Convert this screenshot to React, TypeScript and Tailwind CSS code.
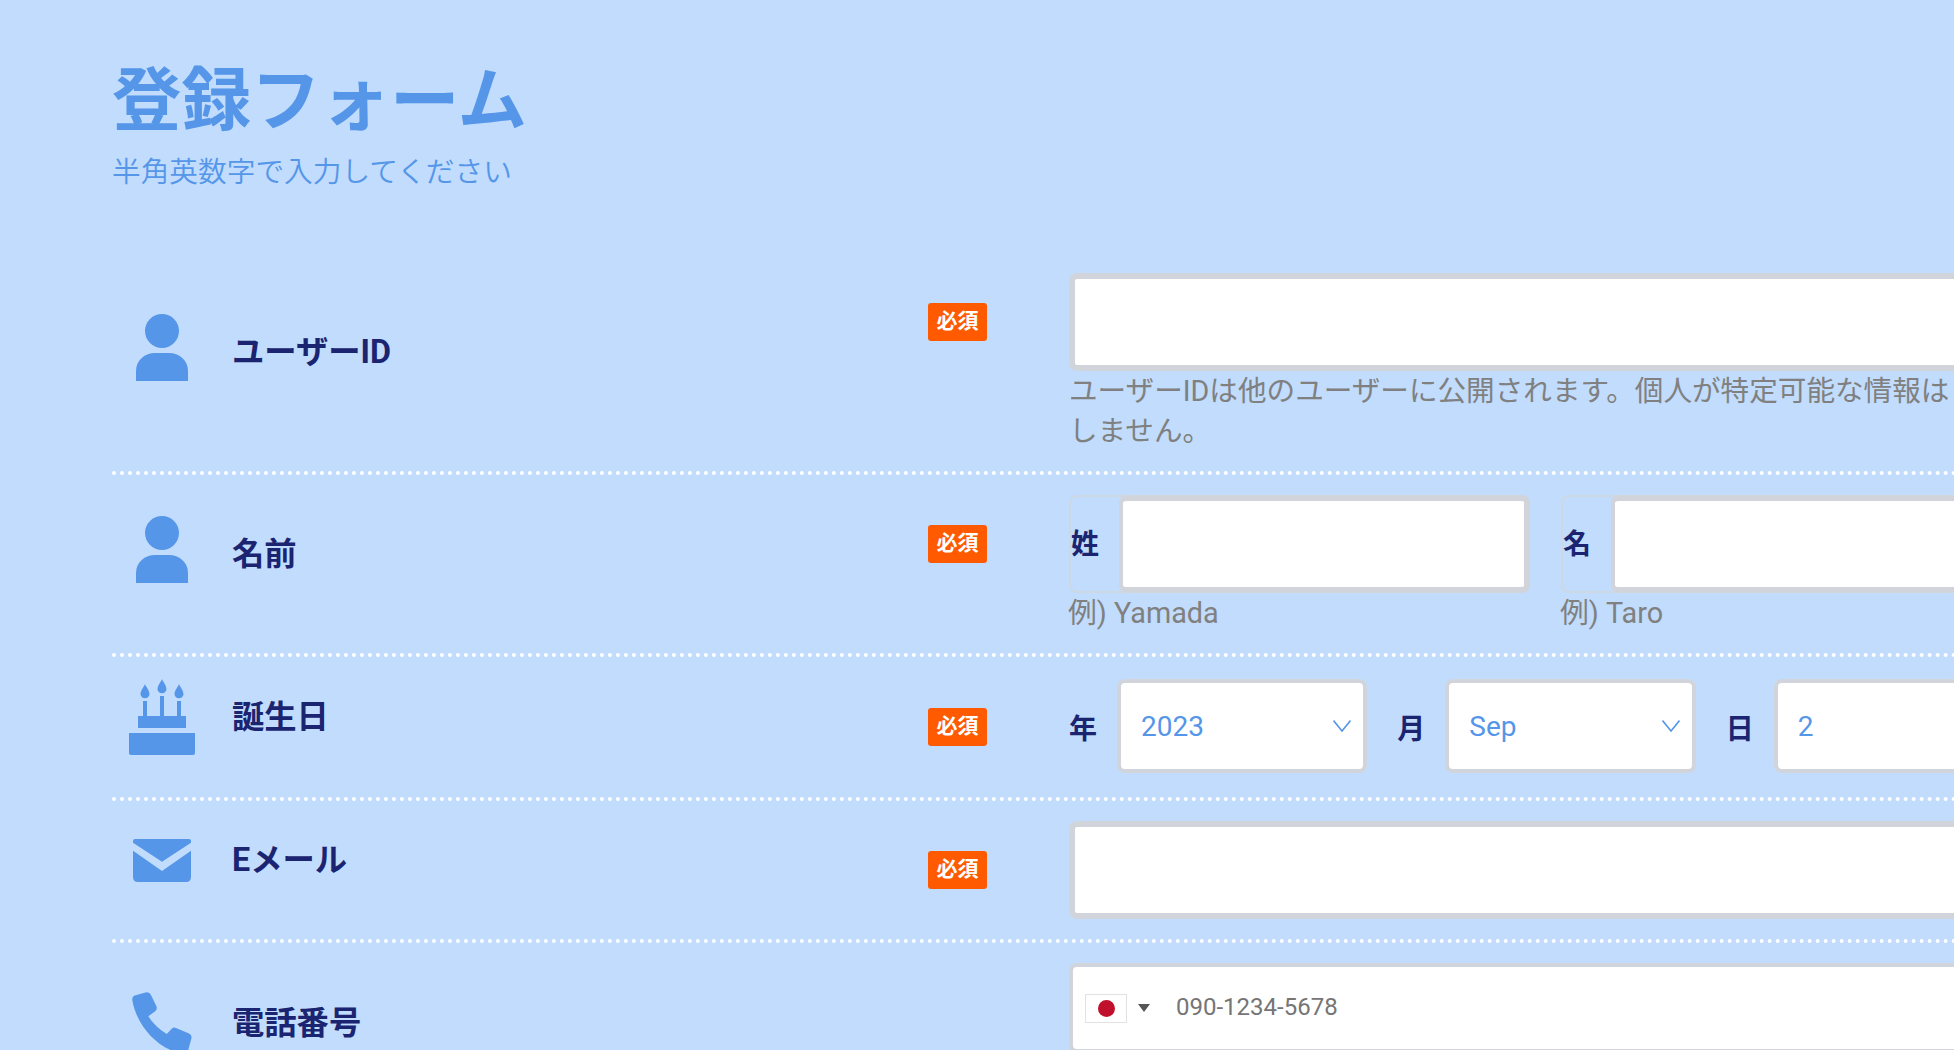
const jp = "font-['Roboto','Noto_Sans_CJK_JP',sans-serif]";

function PersonIcon() {
  return (
    <svg width="52" height="67" viewBox="0 0 52 67" fill="#5596e9" className="mb-[9px]">
      <circle cx="26" cy="17" r="17" />
      <path d="M0 67V57C0 46 9 39 19 39H33C43 39 52 46 52 57V67Z" />
    </svg>
  );
}

function CakeIcon() {
  return (
    <svg width="66" height="76" viewBox="0 0 66 76" fill="#5596e9">
      <path d="M0 54H66V74Q66 76 64 76H2Q0 76 0 74Z" />
      <rect x="9" y="37" width="48" height="12" />
      <rect x="14" y="22" width="4" height="15" />
      <rect x="31" y="17" width="4" height="20" />
      <rect x="48" y="22" width="4" height="15" />
      <path d="M16 5C17 8 20.5 11 20.5 15.5A4.6 4.6 0 0 1 11.5 15.5C11.5 11 15 8 16 5Z" />
      <path d="M33 0C34 3 37.5 6 37.5 10.5A4.6 4.6 0 0 1 28.5 10.5C28.5 6 32 3 33 0Z" />
      <path d="M50 5C51 8 54.5 11 54.5 15.5A4.6 4.6 0 0 1 45.5 15.5C45.5 11 49 8 50 5Z" />
    </svg>
  );
}

function MailIcon() {
  return (
    <svg width="58" height="43" viewBox="0 0 58 43" fill="#5596e9" className="mb-[-1px]">
      <path d="M2 0H56Q58 0 58 2V3.7L29 22.7L0 3.7V2Q0 0 2 0Z" />
      <path d="M0 11.7L29 32L58 11.7V38Q58 43 53 43H5Q0 43 0 38Z" />
    </svg>
  );
}

function PhoneIcon() {
  return (
    <svg width="60" height="63" viewBox="0 0 60 63" fill="#5596e9">
      <path d="M2 3.8L13.5 0.4Q17.5 -0.5 19 3L24.5 14.5Q25.5 17 23.5 19L16.3 24.3Q23 35 34.7 42L40 36.5Q41.5 35 44 36L57 41.5Q60 43 59.5 46L56 59Q55 62 52 62C25 58 4 32 0.3 8Q0 5 2 3.8Z" />
    </svg>
  );
}

function Badge() {
  return (
    <span className="flex h-[38px] w-[59px] items-center justify-center rounded-[3px] bg-[#ff5a00] text-[21px] font-bold text-white">
      必須
    </span>
  );
}

function Row({
  icon,
  label,
  children,
  required = true,
  badgeTop = "pt-[30px]",
}: {
  icon: React.ReactNode;
  label: string;
  children: React.ReactNode;
  required?: boolean;
  badgeTop?: string;
}) {
  return (
    <div className="flex border-b-4 border-dotted border-white py-5">
      <div className="flex w-[816px] items-center pb-[20px]">
        <div className="flex w-[100px] justify-center">{icon}</div>
        <label className="ml-5 text-[32.3px] leading-[40px] font-bold text-[#1b2470]">{label}</label>
      </div>
      <div className={`w-[141px] ${badgeTop}`}>{required && <Badge />}</div>
      <div className="w-[953px]">{children}</div>
    </div>
  );
}

const inputCls =
  "block h-[98px] w-full rounded-[8px] border-[6px] border-[#d1d5db] bg-white px-5 text-[28px] text-[#5596e9] outline-none";

function NameField({ label, example }: { label: string; example: string }) {
  return (
    <div className="flex-1">
      <div className="flex h-[98px] items-center rounded-[8px] border-2 border-[#d1d5db]/70">
        <span className="w-[48px] shrink-0 pt-[2px] text-[28px] font-bold text-[#1b2470]">{label}</span>
        <input className={`${inputCls} -my-[2px] -mr-[2px] min-w-0 flex-1 border-l-4`} />
      </div>
      <p className="-ml-[1px] text-[28.8px] leading-[40px] text-[#808080]">{example}</p>
    </div>
  );
}

function DateField({ label, value }: { label: string; value: string }) {
  return (
    <div className="flex flex-1 items-start">
      <span className="h-[94px] w-[48px] shrink-0 pt-[4px] text-[28px] leading-[94px] font-bold text-[#1b2470]">
        {label}
      </span>
      <div className="relative flex-1">
        <select
          defaultValue={value}
          className="block h-[94px] w-full appearance-none rounded-[8px] border-4 border-[#d1d5db] bg-white pt-[2px] pl-5 text-[28px] text-[#5596e9] outline-none"
        >
          <option>{value}</option>
        </select>
        <svg
          width="18"
          height="12"
          viewBox="0 0 18 12"
          fill="none"
          stroke="#5596e9"
          strokeWidth="1.6"
          className="pointer-events-none absolute top-[41px] right-[16px]"
        >
          <path d="M0.5 0.5L9 11L17.5 0.5" />
        </svg>
      </div>
    </div>
  );
}

export default function App() {
  return (
    <div className={`${jp} h-screen w-screen overflow-hidden bg-[#c1dcfc]`}>
      <div className="ml-[112px] w-[1910px]">
        <header className="h-[253px] pt-[53px]">
          <h1 className="text-[69.5px] leading-[97px] font-bold text-[#5596e9]">登録フォーム</h1>
          <p className="text-[28.7px] leading-[44px] font-[350] text-[#5596e9]">半角英数字で入力してください</p>
        </header>

        <Row icon={<PersonIcon />} label="ユーザーID">
          <input className={inputCls} />
          <p className="text-[28.6px] leading-[40px] whitespace-nowrap text-[#808080]">
            ユーザーIDは他のユーザーに公開されます。個人が特定可能な情報は
            <br />
            しません。
          </p>
        </Row>

        <Row icon={<PersonIcon />} label="名前">
          <div className="flex gap-[31px]">
            <NameField label="姓" example="例) Yamada" />
            <NameField label="名" example="例) Taro" />
          </div>
        </Row>

        <Row icon={<CakeIcon />} label="誕生日" badgeTop="pt-[31px]">
          <div className="-mr-[2px] flex h-[100px] gap-[30px] pt-[2px]">
            <DateField label="年" value="2023" />
            <DateField label="月" value="Sep" />
            <DateField label="日" value="2" />
          </div>
        </Row>

        <Row icon={<MailIcon />} label="Eメール">
          <input className={inputCls} />
        </Row>

        <Row icon={<PhoneIcon />} label="電話番号" required={false}>
          <div className="h-[140px]">
            <div className="flex h-[90px] items-center rounded-[8px] border-4 border-[#d1d5db] bg-white pl-3">
              <span className="flex h-[29px] w-[42px] items-center justify-center border border-[#e2e2e2] bg-white">
                <span className="h-[17px] w-[17px] rounded-full bg-[#c0102b]" />
              </span>
              <svg width="12" height="8" viewBox="0 0 12 8" fill="#555555" className="ml-[11px]">
                <path d="M0 0H12L6 8Z" />
              </svg>
              <input
                placeholder="090-1234-5678"
                className="mb-[2px] ml-[26px] flex-1 bg-transparent text-[24px] outline-none placeholder:text-[#757575]"
              />
            </div>
          </div>
        </Row>
      </div>
    </div>
  );
}
